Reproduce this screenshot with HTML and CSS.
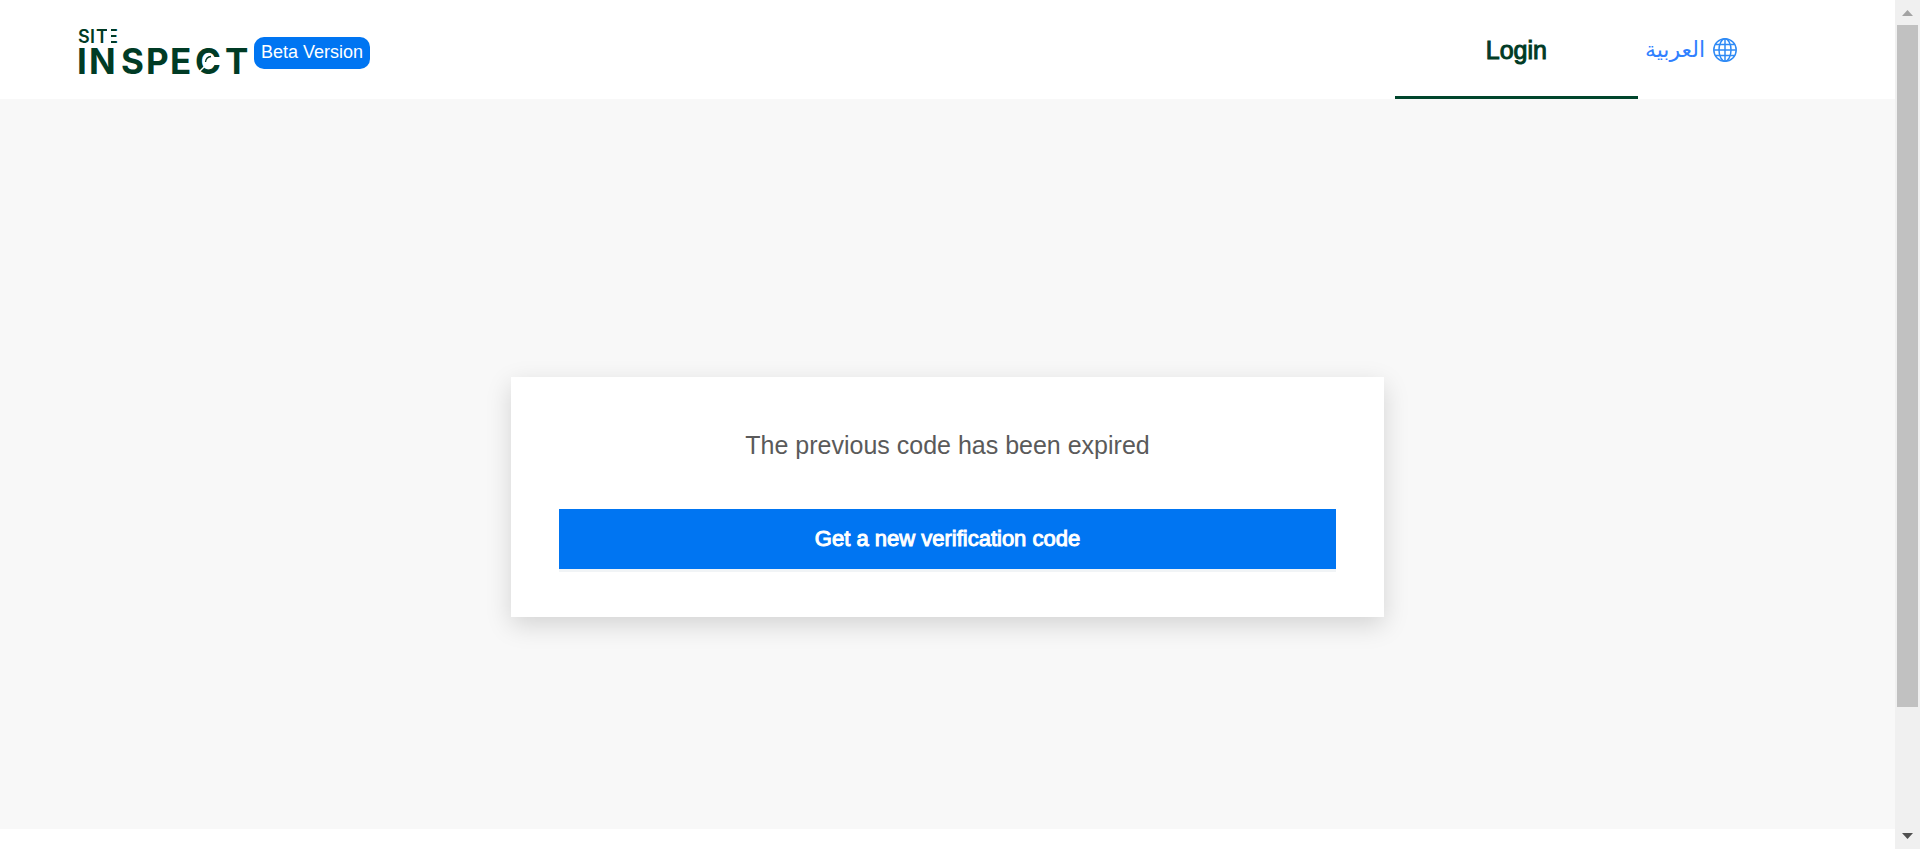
FILE: index.html
```html
<!DOCTYPE html>
<html lang="en">
<head>
<meta charset="utf-8">
<title>Site Inspect</title>
<link rel="stylesheet" href="styles.css">
</head>
<body>
<div class="viewport">
  <div class="page">
    <header class="header">
      <a class="brand" href="#" aria-label="Site Inspect">
        <svg class="logo" viewBox="0 0 170 48" width="170" height="48">
          <g class="logo-text">
            <text class="logo-small" x="0 12 18 29" y="17">SITE</text>
            <text class="logo-large" x="-1 11 43 68 92 117 147" y="48">INSPECT</text>
          </g>
          <path d="M29 2h4v16h-4z" fill="#fff"/>
          <circle cx="132" cy="35" r="6" fill="#fff"/>
          <path d="M121 46l8-8" stroke="#fff" stroke-width="1.500"/>
          <path d="M127.500 36q.5-5 5.500-5.500" fill="none" stroke="#003b25" stroke-width="1.300"/>
        </svg>
      </a>
      <span class="badge">Beta Version</span>
      <nav class="nav">
        <a class="nav-link" href="#">Login</a>
        <a class="lang" href="#">
          <span lang="ar" dir="rtl">العربية</span>
          <svg class="globe" viewBox="0 0 24 24" width="24" height="24" fill="none" stroke="#2f8af5" stroke-width="1.500">
            <circle cx="12" cy="12" r="11.200"/>
            <ellipse cx="12" cy="12" rx="6" ry="11.200"/>
            <path d="M12 1v22M1 12h22M3 6.500h18M3 17.500h18"/>
          </svg>
        </a>
      </nav>
    </header>
    <main class="main">
      <section class="card">
        <p class="message">The previous code has been expired</p>
        <button class="action" type="button">Get a new verification code</button>
      </section>
    </main>
  </div>
  <div class="scrollbar" aria-hidden="true">
    <svg viewBox="0 0 11 6" width="11" height="6" fill="#a3a3a3"><path d="M5.500 0L11 6H0z"/></svg>
    <div class="track"><div class="thumb"></div></div>
    <svg viewBox="0 0 11 6" width="11" height="6" fill="#505050"><path d="M0 0h11L5.500 6z"/></svg>
  </div>
</div>
</body>
</html>
```
FILE: styles.css
```css
* { box-sizing: border-box; }
body {
  margin: 0;
  background: #fff;
  font-family: "Liberation Sans", Arial, sans-serif;
}
.viewport {
  display: grid;
  grid-template-columns: 1fr 25px;
  height: 100vh;
  overflow: hidden;
}
.page {
  display: flex;
  flex-direction: column;
  padding-bottom: 20px;
}
.header {
  display: flex;
  align-items: center;
  height: 99px;
  padding: 0 158px 0 78px;
}
.brand { display: block; height: 48px; margin-right: 6px; }
.logo { display: block; overflow: visible; }
.logo-text { font-family: Inter, sans-serif; fill: #003b25; }
.logo-small { font-size: 18px; font-weight: 600; }
.logo-large { font-size: 35px; font-weight: 700; }
.badge {
  height: 32px;
  margin-top: 7px;
  padding: 0 7px;
  border-radius: 10px;
  background: #0075f2;
  color: #fff;
  font-size: 18px;
  line-height: 30px;
}
.nav {
  display: flex;
  align-self: stretch;
  margin-left: auto;
}
.nav-link {
  width: 243px;
  border-bottom: 3px solid #00452c;
  color: #003b25;
  font-size: 25px;
  line-height: 100px;
  text-align: center;
  text-decoration: none;
  -webkit-text-stroke: 1px #003b25;
}
.lang {
  display: flex;
  align-items: center;
  gap: 8px;
  margin-left: 7px;
  color: #2f80ff;
  font-family: "DejaVu Sans", sans-serif;
  font-size: 22px;
  text-decoration: none;
}
.main {
  display: flex;
  flex: 1;
  flex-direction: column;
  align-items: center;
  padding: 278px 24px 0;
  background: #f8f8f8;
}
.card {
  width: 100%;
  max-width: 873px;
  padding: 48px;
  background: #fff;
  box-shadow: 0 8px 24px rgba(0, 0, 0, 0.15);
}
.message {
  margin: 0 0 44px;
  color: #5a5a5a;
  font-size: 25px;
  line-height: 40px;
  text-align: center;
}
.action {
  display: block;
  width: 100%;
  height: 60px;
  border: 0;
  background: #0075f2;
  box-shadow: 0 3px 0 #f1f4f6;
  color: #fff;
  font-family: inherit;
  font-size: 22px;
  -webkit-text-stroke: 1px #fff;
}
.scrollbar {
  display: flex;
  flex-direction: column;
  align-items: center;
  padding: 10px 2px;
  background: #f0f0f0;
}
.track { flex: 1; align-self: stretch; padding: 9px 0; }
.thumb { height: 85.3%; background: #c1c1c1; }
```
